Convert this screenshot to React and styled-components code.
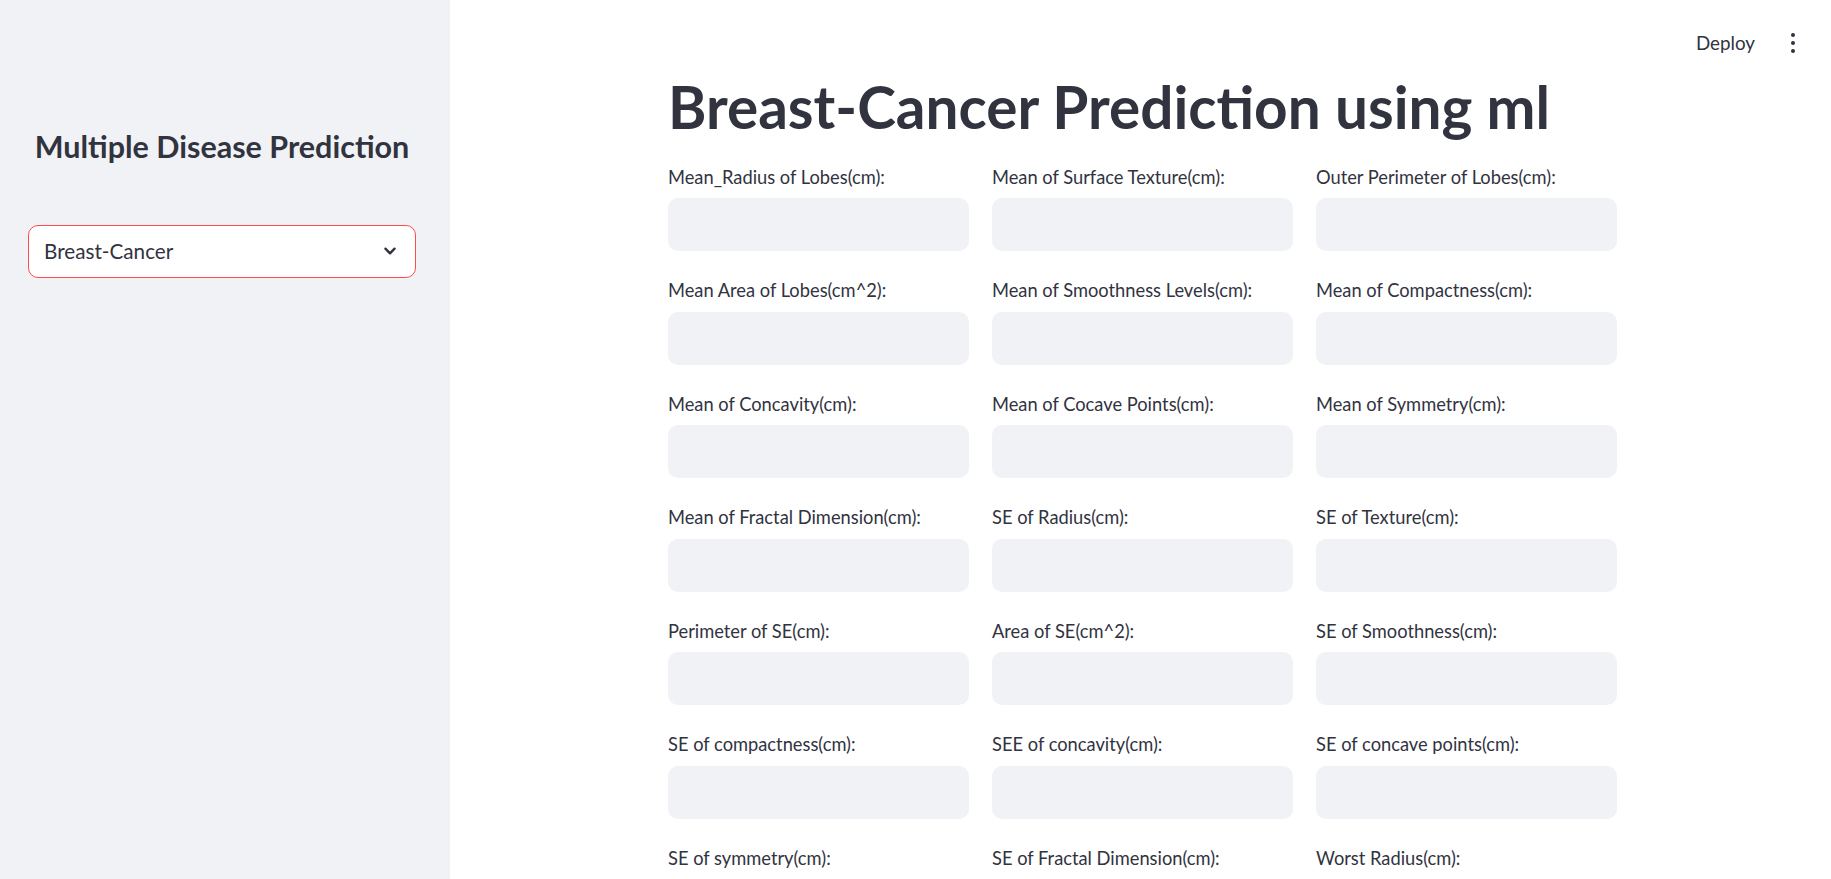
import styled, { createGlobalStyle } from "styled-components";

const GlobalStyle = createGlobalStyle`
  html, body {
    margin: 0;
    padding: 0;
    height: 100%;
    overflow: hidden;
    background: #ffffff;
    color: #31333f;
    font-family: "Lato", "Open Sans", "Liberation Sans", sans-serif;
  }
  #root {
    height: 100%;
  }
  * {
    box-sizing: border-box;
  }
`;

const FIELDS = [
  "Mean_Radius of Lobes(cm):",
  "Mean of Surface Texture(cm):",
  "Outer Perimeter of Lobes(cm):",
  "Mean Area of Lobes(cm^2):",
  "Mean of Smoothness Levels(cm):",
  "Mean of Compactness(cm):",
  "Mean of Concavity(cm):",
  "Mean of Cocave Points(cm):",
  "Mean of Symmetry(cm):",
  "Mean of Fractal Dimension(cm):",
  "SE of Radius(cm):",
  "SE of Texture(cm):",
  "Perimeter of SE(cm):",
  "Area of SE(cm^2):",
  "SE of Smoothness(cm):",
  "SE of compactness(cm):",
  "SEE of concavity(cm):",
  "SE of concave points(cm):",
  "SE of symmetry(cm):",
  "SE of Fractal Dimension(cm):",
  "Worst Radius(cm):",
  "Worst Texture(cm):",
  "Worst Perimeter(cm):",
  "Worst Area(cm^2):",
  "Worst Smoothness(cm):",
  "Worst Compactness(cm):",
  "Worst Concavity(cm):",
  "Worst Concave Points(cm):",
  "Worst Symmetry(cm):",
  "Worst Fractal Dimension(cm):",
];

const Shell = styled.div`
  display: flex;
  height: 100%;
`;

const Sidebar = styled.aside`
  flex: 0 0 450px;
  background: #f0f2f6;
  padding: 0 34px 0 28px;
`;

const SideTitle = styled.h2`
  margin: 0;
  padding: 128px 0 0;
  font-size: 30.5px;
  font-weight: 700;
  line-height: 1.2;
  text-align: center;
  color: #31333f;
`;

const Select = styled.div`
  margin-top: 60px;
  height: 53px;
  display: flex;
  align-items: center;
  justify-content: space-between;
  padding: 0 14px 0 15px;
  background: #ffffff;
  border: 1px solid #ff4b4b;
  border-radius: 10px;
  font-size: 20.7px;
  color: #31333f;
`;

const Main = styled.main`
  flex: 1;
  position: relative;
  overflow-y: auto;
  scrollbar-width: none;
  padding: 0 213px 80px 218px;
`;

const Header = styled.header`
  position: absolute;
  top: 0;
  right: 0;
  height: 81px;
  display: flex;
  align-items: center;
  gap: 36px;
  padding: 0 36px 0 0;
  margin-top: 2px;
`;

const DeployButton = styled.button`
  border: none;
  background: transparent;
  font-family: inherit;
  font-size: 18.8px;
  color: #31333f;
  padding: 0;
  cursor: pointer;
`;

const Kebab = styled.div`
  display: flex;
  flex-direction: column;
  gap: 4px;

  span {
    width: 4px;
    height: 4px;
    border-radius: 50%;
    background: #31333f;
  }
`;

const Title = styled.h1`
  margin: 0;
  padding: 71px 0 17.7px;
  font-size: 58.5px;
  font-weight: 700;
  line-height: 1.2;
  color: #31333f;
  white-space: nowrap;
`;

const Grid = styled.div`
  display: grid;
  grid-template-columns: repeat(3, 301px);
  column-gap: 23px;
  row-gap: 21px;
`;

const Field = styled.div`
  display: flex;
  flex-direction: column;
`;

const Label = styled.label`
  height: 36px;
  display: flex;
  align-items: center;
  margin-bottom: 3.5px;
  font-size: 18.3px;
  color: #31333f;
  white-space: nowrap;
`;

const Input = styled.input`
  height: 53px;
  width: 100%;
  border: none;
  outline: none;
  border-radius: 10px;
  background: #f0f2f6;
  padding: 0 14px;
  font-family: inherit;
  font-size: 19px;
  color: #31333f;
`;

function Chevron() {
  return (
    <svg width="22" height="22" viewBox="0 0 24 24" fill="none">
      <path
        d="M7 9.5l5 5 5-5"
        stroke="#31333f"
        strokeWidth="2.6"
        strokeLinecap="round"
        strokeLinejoin="round"
      />
    </svg>
  );
}

export default function App() {
  return (
    <>
      <GlobalStyle />
      <Shell>
        <Sidebar>
          <SideTitle>Multiple Disease Prediction</SideTitle>
          <Select>
            <span>Breast-Cancer</span>
            <Chevron />
          </Select>
        </Sidebar>
        <Main>
          <Header>
            <DeployButton>Deploy</DeployButton>
            <Kebab>
              <span />
              <span />
              <span />
            </Kebab>
          </Header>
          <Title>Breast-Cancer Prediction using ml</Title>
          <Grid>
            {FIELDS.map((label) => (
              <Field key={label}>
                <Label>{label}</Label>
                <Input type="text" />
              </Field>
            ))}
          </Grid>
        </Main>
      </Shell>
    </>
  );
}
